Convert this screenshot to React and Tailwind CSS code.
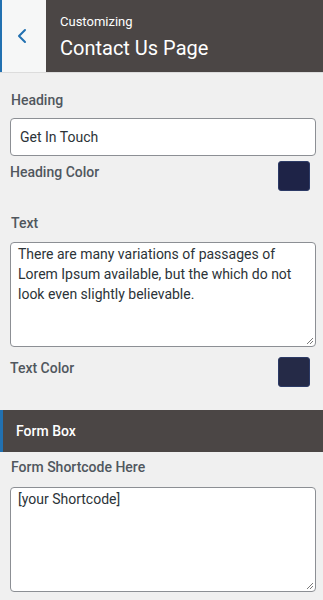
import { ChevronLeft } from "lucide-react";

function Label({ children, className = "" }) {
  return (
    <div className={`text-[14px] font-medium leading-none text-[#50575e] ${className}`}>
      {children}
    </div>
  );
}

function ColorRow({ label, color }) {
  return (
    <div className="flex items-start justify-between pr-[6px]">
      <Label className="pt-[4px]">{label}</Label>
      <span
        className="h-[30px] w-[32px] rounded-[3px] border border-[#2c3a66]"
        style={{ backgroundColor: color }}
      />
    </div>
  );
}

function TextBox({ children }) {
  return (
    <div className="relative h-[105px] overflow-hidden rounded-[4px] border border-[#8c8f94] bg-white px-[7px] pt-[1px] text-[14px] leading-[20px] text-[#2c3338]">
      {children}
      {/* resize grip */}
      <svg className="absolute bottom-[1px] right-[1px] h-[8px] w-[8px]" viewBox="0 0 8 8">
        <path d="M7 1 1 7M7 4 4 7" stroke="#7a7a7a" strokeWidth="1" />
      </svg>
    </div>
  );
}

export default function App() {
  return (
    <div className="min-h-[600px] w-[323px] bg-[#f0f0f0] font-['Roboto',sans-serif]">
      <div className="flex h-[73px] border-b border-[#dcdcdc]">
        <button
          type="button"
          className="flex w-[46px] shrink-0 items-center justify-center border-l-2 border-[#2271b1] bg-[#f6f7f7] pr-[4px] text-[#2271b1]"
        >
          <ChevronLeft className="h-[24px] w-[24px]" strokeWidth={2} />
        </button>
        <div className="flex-1 bg-[#4b4645] pl-[14px] pt-[14px] text-white">
          <div className="text-[13px] leading-[16px]">Customizing</div>
          <div className="mt-[6px] text-[20px] leading-[24px]">Contact Us Page</div>
        </div>
      </div>

      <div className="pl-[10px] pr-[7px] pt-[20px]">
        <Label className="pl-px">Heading</Label>
        <div className="mt-[11px] flex h-[38px] items-center rounded-[4px] border border-[#8c8f94] bg-white px-[9px] text-[14px] text-[#2c3338]">
          Get In Touch
        </div>
        <div className="mt-[5px]">
          <ColorRow label="Heading Color" color="#1e2347" />
        </div>

        <Label className="mt-[25px] pl-px">Text</Label>
        <div className="mt-[12px]">
          <TextBox>
            There are many variations of passages of Lorem Ipsum available, but the which do not look even slightly believable.
          </TextBox>
        </div>
        <div className="mt-[10px]">
          <ColorRow label="Text Color" color="#252a47" />
        </div>
      </div>

      <div className="mt-[23px] flex h-[42px] items-center border-l-[3px] border-[#2271b1] bg-[#4b4645] pl-[13px] text-[14px] font-medium text-white">
        Form Box
      </div>

      <div className="pl-[10px] pr-[7px] pt-[8px]">
        <Label className="pl-px">Form Shortcode Here</Label>
        <div className="mt-[13px]">
          <TextBox>[your Shortcode]</TextBox>
        </div>
      </div>
    </div>
  );
}
